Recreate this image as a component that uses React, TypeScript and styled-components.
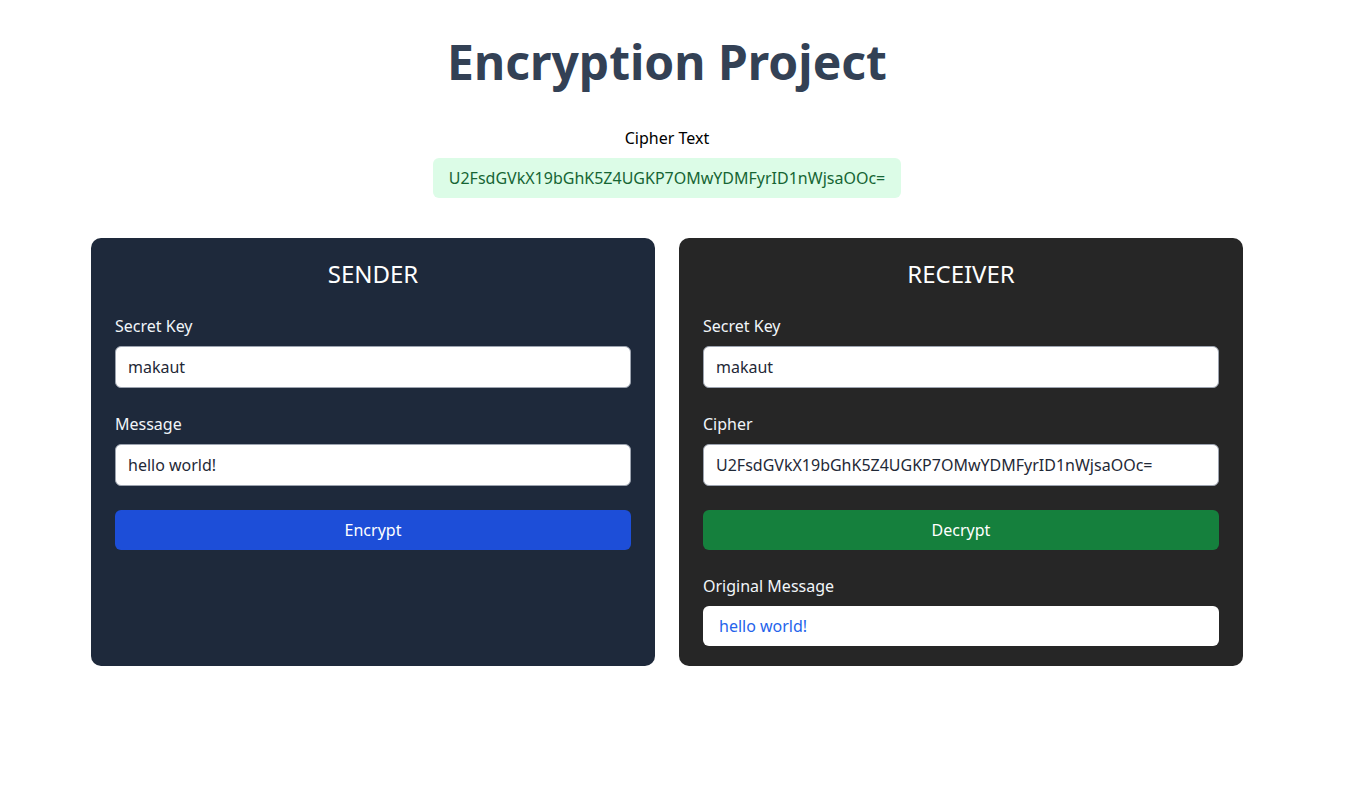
import React from "react";
import styled, { createGlobalStyle } from "styled-components";

const Global = createGlobalStyle`
  html, body { margin: 0; padding: 0; background: #ffffff; }
  body { font-family: "Noto Sans", "Open Sans", sans-serif; color: #000; }
  * { box-sizing: border-box; }
`;

const Page = styled.div`
  width: 1334px;
  display: flex;
  flex-direction: column;
  align-items: center;
  padding-top: 32px;
`;

const Title = styled.h1`
  margin: 0;
  font-size: 48px;
  line-height: 60px;
  font-weight: 700;
  color: #334155;
`;

const CipherLabel = styled.div`
  margin-top: 34px;
  font-size: 16px;
  line-height: 24px;
  color: #000;
`;

const CipherBox = styled.div`
  margin-top: 8px;
  background: #dcfce7;
  color: #166534;
  font-size: 16px;
  line-height: 24px;
  padding: 8px 16px;
  border-radius: 6px;
`;

const Grid = styled.div`
  margin-top: 40px;
  display: grid;
  grid-template-columns: 564px 564px;
  gap: 24px;
`;

const Card = styled.section<{ $bg: string }>`
  background: ${(p) => p.$bg};
  border-radius: 10px;
  padding: 20px 24px;
  color: #fff;
  display: flex;
  flex-direction: column;
`;

const CardTitle = styled.h2`
  margin: 0 0 24px;
  text-align: center;
  font-size: 24px;
  line-height: 32px;
  font-weight: 400;
`;

const Field = styled.div`
  display: flex;
  flex-direction: column;
  gap: 8px;
  margin-bottom: 24px;
`;

const Label = styled.label`
  font-size: 16px;
  line-height: 24px;
  color: #f1f5f9;
`;

const Input = styled.input`
  height: 42px;
  border: 1px solid #9ca3af;
  border-radius: 6px;
  padding: 8px 12px;
  font-family: inherit;
  font-size: 16px;
  line-height: 24px;
  color: #1f2937;
  background: #fff;
  outline: none;
`;

const Button = styled.button<{ $bg: string }>`
  height: 40px;
  border: none;
  border-radius: 6px;
  background: ${(p) => p.$bg};
  color: #fff;
  font-family: inherit;
  font-size: 16px;
  line-height: 24px;
  cursor: pointer;
`;

const ResultField = styled(Field)`
  margin-top: 24px;
  margin-bottom: 0;
`;

const Output = styled.div`
  height: 40px;
  background: #fff;
  border-radius: 6px;
  padding: 8px 16px;
  color: #2563eb;
  font-size: 16px;
  line-height: 24px;
`;

const CIPHER = "U2FsdGVkX19bGhK5Z4UGKP7OMwYDMFyrID1nWjsaOOc=";

export default function App() {
  return (
    <>
      <Global />
      <Page>
        <Title>Encryption Project</Title>
        <CipherLabel>Cipher Text</CipherLabel>
        <CipherBox>{CIPHER}</CipherBox>
        <Grid>
          <Card $bg="#1e293b">
            <CardTitle>SENDER</CardTitle>
            <Field>
              <Label>Secret Key</Label>
              <Input defaultValue="makaut" />
            </Field>
            <Field>
              <Label>Message</Label>
              <Input defaultValue="hello world!" />
            </Field>
            <Button $bg="#1d4ed8">Encrypt</Button>
          </Card>
          <Card $bg="#262626">
            <CardTitle>RECEIVER</CardTitle>
            <Field>
              <Label>Secret Key</Label>
              <Input defaultValue="makaut" />
            </Field>
            <Field>
              <Label>Cipher</Label>
              <Input defaultValue={CIPHER} />
            </Field>
            <Button $bg="#15803d">Decrypt</Button>
            <ResultField>
              <Label>Original Message</Label>
              <Output>hello world!</Output>
            </ResultField>
          </Card>
        </Grid>
      </Page>
    </>
  );
}
